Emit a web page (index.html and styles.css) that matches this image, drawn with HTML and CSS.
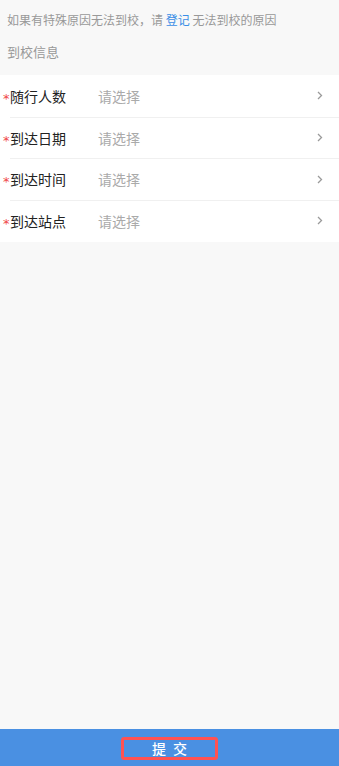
FILE: index.html
```html
<!DOCTYPE html>
<html lang="zh-CN">
<head>
    <meta charset="UTF-8">
    <meta name="viewport" content="width=device-width, initial-scale=1.0">
    <title>到校信息</title>
    <link rel="stylesheet" href="styles.css">
</head>
<body>
    <div id="page">
        <p class="tip">如果有特殊原因无法到校，请 <a class="link" href="#">登记</a> 无法到校的原因</p>
        <h4 class="section-title">到校信息</h4>

        <!-- 表单 -->
        <div class="form-list">
            <div class="form-row">
                <span class="required">*</span>
                <span class="label">随行人数</span>
                <span class="value">请选择</span>
                <svg class="arrow" width="6" height="9" viewBox="0 0 6 9"><path d="M1 1l3.5 3.5L1 8" fill="none" stroke="#9a9a9a" stroke-width="1.3"/></svg>
            </div>
            <div class="form-row">
                <span class="required">*</span>
                <span class="label">到达日期</span>
                <span class="value">请选择</span>
                <svg class="arrow" width="6" height="9" viewBox="0 0 6 9"><path d="M1 1l3.5 3.5L1 8" fill="none" stroke="#9a9a9a" stroke-width="1.3"/></svg>
            </div>
            <div class="form-row">
                <span class="required">*</span>
                <span class="label">到达时间</span>
                <span class="value">请选择</span>
                <svg class="arrow" width="6" height="9" viewBox="0 0 6 9"><path d="M1 1l3.5 3.5L1 8" fill="none" stroke="#9a9a9a" stroke-width="1.3"/></svg>
            </div>
            <div class="form-row">
                <span class="required">*</span>
                <span class="label">到达站点</span>
                <span class="value">请选择</span>
                <svg class="arrow" width="6" height="9" viewBox="0 0 6 9"><path d="M1 1l3.5 3.5L1 8" fill="none" stroke="#9a9a9a" stroke-width="1.3"/></svg>
            </div>
        </div>
    </div>

    <div id="footer">
        <button class="submit">提 交</button>
    </div>
</body>
</html>
```

FILE: styles.css
```css
html, body {
    margin: 0;
    height: 100%;
}
body {
    font-family: "Noto Sans CJK SC", "Noto Sans", sans-serif;
    background-color: #f8f8f8;
    display: flex;
    flex-direction: column;
}
#page {
    flex: 1;
}
.tip {
    margin: 0;
    padding: 11px 7px 0;
    font-size: 12px;
    line-height: 18px;
    color: #999;
}
.link {
    color: #3a8ee6;
    text-decoration: none;
}
.section-title {
    margin: 0;
    padding: 13px 7px 0;
    height: 33px;
    font-size: 13px;
    font-weight: normal;
    line-height: 20px;
    color: #999;
}
.form-list {
    background: #fff;
}
.form-row {
    display: flex;
    align-items: center;
    height: 41.7px;
    box-sizing: border-box;
    padding-left: 3px;
    padding-right: 16px;
    position: relative;
}
.form-row + .form-row::before {
    content: "";
    position: absolute;
    top: 0;
    left: 10px;
    right: 0;
    height: 1px;
    background: #f0f0f0;
}
.required {
    color: #f04848;
    font-family: "DejaVu Sans", sans-serif;
    font-style: italic;
    font-size: 13px;
    width: 7px;
    line-height: 1;
    margin-top: 5px;
}
.label {
    width: 88px;
    font-size: 14px;
    color: #222;
}
.value {
    flex: 1;
    font-size: 14px;
    color: #aaa;
}
.arrow {
    margin-top: 0;
}
#footer {
    height: 37px;
    background: #4a90e2;
    display: flex;
    justify-content: center;
    align-items: center;
}
.submit {
    width: 97px;
    height: 23px;
    margin-top: 1px;
    border: 3px solid #ff5252;
    border-radius: 3px;
    background: transparent;
    color: #fff;
    font-family: inherit;
    font-size: 14px;
    font-weight: 500;
    letter-spacing: 2px;
    line-height: 15px;
    padding: 0 0 0 2px;
}
```
